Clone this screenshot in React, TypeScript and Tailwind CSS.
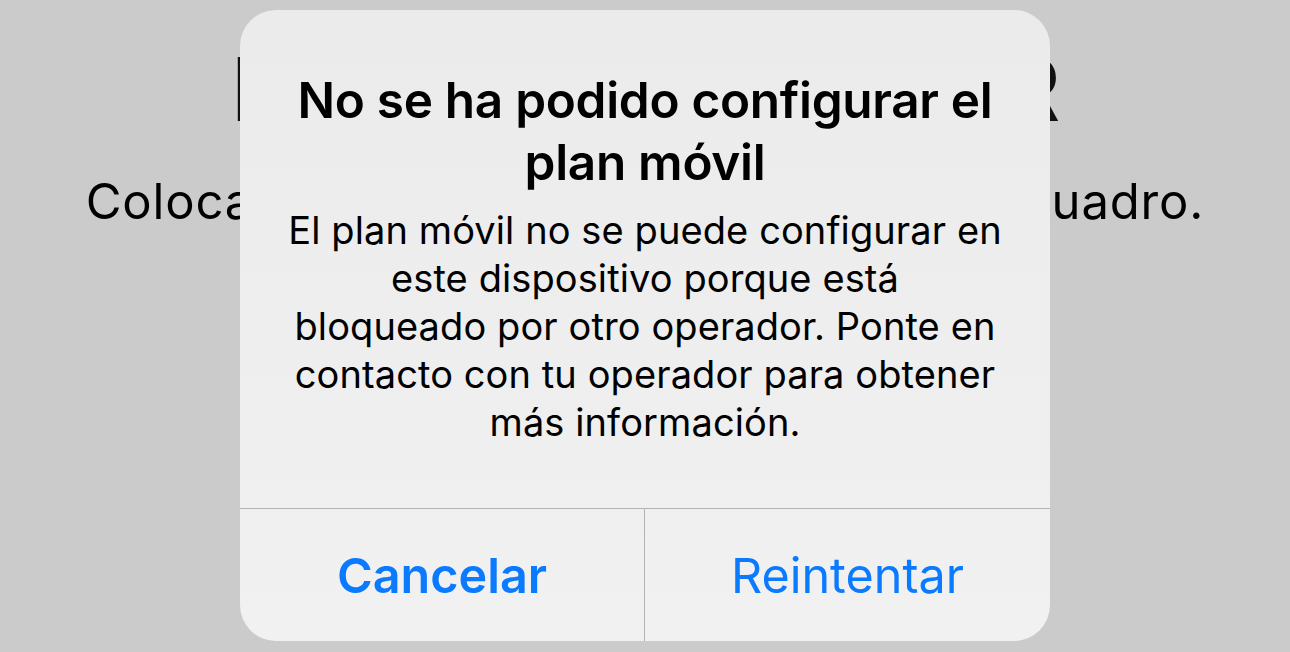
import React from "react";

const sf = { fontFamily: "Inter, 'Noto Sans', sans-serif" };

export default function App() {
  return (
    <main
      className="relative h-[652px] w-full overflow-hidden bg-[#cbcbcb] text-black"
      style={sf}
    >
      {/* screen behind the alert */}
      <div className="flex flex-col items-center pt-[39px]">
        <h1 className="whitespace-nowrap text-[88px] font-bold leading-[100px] tracking-[-2.1px] text-[#111]">
          Escanear código QR
        </h1>
        <p className="mt-[33px] whitespace-nowrap text-[49px] leading-[60px] tracking-[0.85px]">
          Coloca el código QR en el centro del recuadro.
        </p>
      </div>

      {/* alert */}
      <div className="absolute left-[240px] top-[10px] flex h-[631px] w-[810px] flex-col rounded-[36px] bg-gradient-to-b from-[#ebebeb] to-[#f1f1f1]">
        <div className="flex flex-1 flex-col items-center px-[20px] pt-[59px] text-center">
          <h2 className="whitespace-nowrap text-[49.5px] font-semibold leading-[62px] tracking-[-0.3px]">
            No se ha podido configurar el
            <br />
            plan móvil
          </h2>
          <p className="mt-[13px] whitespace-nowrap text-[38px] leading-[48px] tracking-[0.1px]">
            El plan móvil no se puede configurar en
            <br />
            este dispositivo porque está
            <br />
            bloqueado por otro operador. Ponte en
            <br />
            contacto con tu operador para obtener
            <br />
            más información.
          </p>
        </div>
        <div className="grid h-[133px] grid-cols-2 border-t border-[#b4b4b4]">
          <button className="flex items-center justify-center border-r border-[#b4b4b4] pt-[2px] text-[48.5px] font-semibold text-[#0a7aff]">
            Cancelar
          </button>
          <button className="flex items-center justify-center pt-[2px] text-[48.5px] text-[#0a7aff]">
            Reintentar
          </button>
        </div>
      </div>
    </main>
  );
}
